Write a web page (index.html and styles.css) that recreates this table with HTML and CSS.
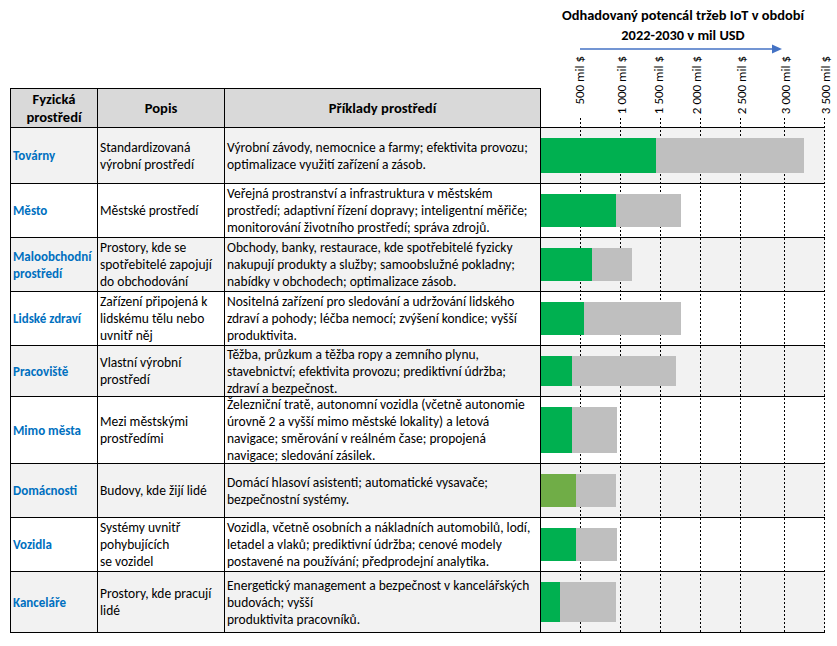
FILE: index.html
```
<!DOCTYPE html>
<html lang="cs">
<head>
<meta charset="utf-8">
<title>IoT prostředí</title>
<link rel="stylesheet" href="styles.css">
</head>
<body>
<div class="page">
  <div class="top">
    <div class="chart-title">
      <div class="title-text">Odhadovaný potencál tržeb IoT v období<br>2022-2030 v mil USD</div>
      <svg class="arrow" width="284" height="10" viewBox="0 0 284 10">
        <line x1="39" y1="5" x2="232" y2="5" stroke="#4472c4" stroke-width="1.5"/>
        <polygon points="231,0.5 241,5 231,9.5" fill="#4472c4"/>
      </svg>
    </div>
  </div>
  <div class="grid">
    <div class="cell head first">Fyzická<br>prostředí</div>
    <div class="cell head">Popis</div>
    <div class="cell head">Příklady prostředí</div>
    <div class="chart-head"></div>

    <div class="cell name first alt">Továrny</div>
    <div class="cell alt">Standardizovaná<br>výrobní prostředí</div>
    <div class="cell alt">Výrobní závody, nemocnice a farmy; efektivita provozu;<br>optimalizace využití zařízení a zásob.</div>
    <div class="bar-cell alt"><span class="seg green" style="width:115px"></span><span class="seg grey" style="width:148px"></span></div>

    <div class="cell name first">Město</div>
    <div class="cell">Městské prostředí</div>
    <div class="cell">Veřejná prostranství a infrastruktura v městském<br>prostředí; adaptivní řízení dopravy; inteligentní měřiče;<br>monitorování životního prostředí; správa zdrojů.</div>
    <div class="bar-cell"><span class="seg green" style="width:75px"></span><span class="seg grey" style="width:65px"></span></div>

    <div class="cell name first alt">Maloobchodní<br>prostředí</div>
    <div class="cell alt">Prostory, kde se<br>spotřebitelé zapojují<br>do obchodování</div>
    <div class="cell alt">Obchody, banky, restaurace, kde spotřebitelé fyzicky<br>nakupují produkty a služby; samoobslužné pokladny;<br>nabídky v obchodech; optimalizace zásob.</div>
    <div class="bar-cell alt"><span class="seg green" style="width:51px"></span><span class="seg grey" style="width:40px"></span></div>

    <div class="cell name first">Lidské zdraví</div>
    <div class="cell">Zařízení připojená k<br>lidskému tělu nebo<br>uvnitř něj</div>
    <div class="cell">Nositelná zařízení pro sledování a udržování lidského<br>zdraví a pohody; léčba nemocí; zvýšení kondice; vyšší<br>produktivita.</div>
    <div class="bar-cell"><span class="seg green" style="width:43px"></span><span class="seg grey" style="width:97px"></span></div>

    <div class="cell name first alt">Pracoviště</div>
    <div class="cell alt">Vlastní výrobní<br>prostředí</div>
    <div class="cell alt">Těžba, průzkum a těžba ropy a zemního plynu,<br>stavebnictví; efektivita provozu; prediktivní údržba;<br>zdraví a bezpečnost.</div>
    <div class="bar-cell alt"><span class="seg green" style="width:31px"></span><span class="seg grey" style="width:104px"></span></div>

    <div class="cell name first">Mimo města</div>
    <div class="cell">Mezi městskými<br>prostředími</div>
    <div class="cell">Železniční tratě, autonomní vozidla (včetně autonomie<br>úrovně 2 a vyšší mimo městské lokality) a letová<br>navigace; směrování v reálném čase; propojená<br>navigace; sledování zásilek.</div>
    <div class="bar-cell"><span class="seg green" style="width:31px"></span><span class="seg grey" style="width:45px"></span></div>

    <div class="cell name first alt">Domácnosti</div>
    <div class="cell alt">Budovy, kde žijí lidé</div>
    <div class="cell alt">Domácí hlasoví asistenti; automatické vysavače;<br>bezpečnostní systémy.</div>
    <div class="bar-cell alt"><span class="seg lightgreen" style="width:35px"></span><span class="seg grey" style="width:40px"></span></div>

    <div class="cell name first">Vozidla</div>
    <div class="cell">Systémy uvnitř<br>pohybujících<br>se vozidel</div>
    <div class="cell">Vozidla, včetně osobních a nákladních automobilů, lodí,<br>letadel a vlaků; prediktivní údržba; cenové modely<br>postavené na používání; předprodejní analytika.</div>
    <div class="bar-cell"><span class="seg green" style="width:35px"></span><span class="seg grey" style="width:41px"></span></div>

    <div class="cell name first alt">Kanceláře</div>
    <div class="cell alt">Prostory, kde pracují<br>lidé</div>
    <div class="cell alt">Energetický management a bezpečnost v kancelářských<br>budovách; vyšší<br>produktivita pracovníků.</div>
    <div class="bar-cell alt"><span class="seg green" style="width:19px"></span><span class="seg grey" style="width:56px"></span></div>

    <div class="overlay">
      <span class="gridline" style="left:39px"></span>
      <span class="gridline" style="left:79px"></span>
      <span class="gridline" style="left:119px"></span>
      <span class="gridline" style="left:159px"></span>
      <span class="gridline" style="left:199px"></span>
      <span class="gridline" style="left:243px"></span>
      <span class="gridline" style="left:283px"></span>
      <span class="axis-label" style="left:32px">500 mil $</span>
      <span class="axis-label" style="left:74px">1 000 mil $</span>
      <span class="axis-label" style="left:111px">1 500 mil $</span>
      <span class="axis-label" style="left:149px">2 000 mil $</span>
      <span class="axis-label" style="left:194px">2 500 mil $</span>
      <span class="axis-label" style="left:238px">3 000 mil $</span>
      <span class="axis-label" style="left:278px">3 500 mil $</span>
    </div>
  </div>
</div>
</body>
</html>
```
FILE: styles.css
```
* { box-sizing: border-box; }
html, body { margin: 0; padding: 0; background: #fff; }
body {
  font-family: "Carlito", "Lato", sans-serif;
  font-size: 13.5px;
  color: #000;
}
.page { padding-left: 10px; width: 837px; }
.top { height: 88px; display: flex; }
.chart-title { margin-left: 531px; width: 284px; padding-top: 6px; }
.title-text {
  font-weight: bold;
  font-size: 14.4px;
  line-height: 19.5px;
  text-align: center;
}
.arrow { display: block; margin-top: -1px; }

.grid {
  display: grid;
  grid-template-columns: 88px 127px 316px 284px;
  grid-template-rows: 40px 56px 54px 54px 54px 51px 67px 54px 54px 61px;
  position: relative;
}
.cell {
  display: flex;
  align-items: center;
  padding: 0 2px;
  line-height: 17px;
  white-space: nowrap;
  border-right: 1px solid #000;
  border-bottom: 1px solid #000;
  background: #fff;
}
.cell.first { border-left: 1px solid #000; }
.cell.head {
  background: #d9d9d9;
  border-top: 1px solid #000;
  font-weight: bold;
  font-size: 14.6px;
  line-height: 18px;
  justify-content: center;
  text-align: center;
}
.cell.alt, .bar-cell.alt { background: #f2f2f2; }
.cell.name { color: #0070c0; font-weight: bold; font-size: 13px; }
.chart-head { border-bottom: 1px solid #000; }

.bar-cell {
  display: flex;
  padding: 10px 0;
  border-bottom: 1px solid #000;
  background: #fff;
}
.seg { position: relative; z-index: 2; height: 100%; display: block; }
.green { background: #00b050; }
.lightgreen { background: #70ad47; }
.grey { background: #bfbfbf; }

.overlay {
  grid-column: 4;
  grid-row: 1 / -1;
  position: absolute;
  inset: 0;
  z-index: 1;
  pointer-events: none;
}
.gridline {
  position: absolute;
  top: 30px;
  bottom: 0;
  width: 1px;
  background: repeating-linear-gradient(to bottom, #000 0 2px, transparent 2px 4px);
}
.axis-label {
  position: absolute;
  top: -32px;
  writing-mode: vertical-rl;
  transform: rotate(180deg);
  font-size: 13px;
  line-height: 14px;
  width: 14px;
  white-space: nowrap;
}
```
